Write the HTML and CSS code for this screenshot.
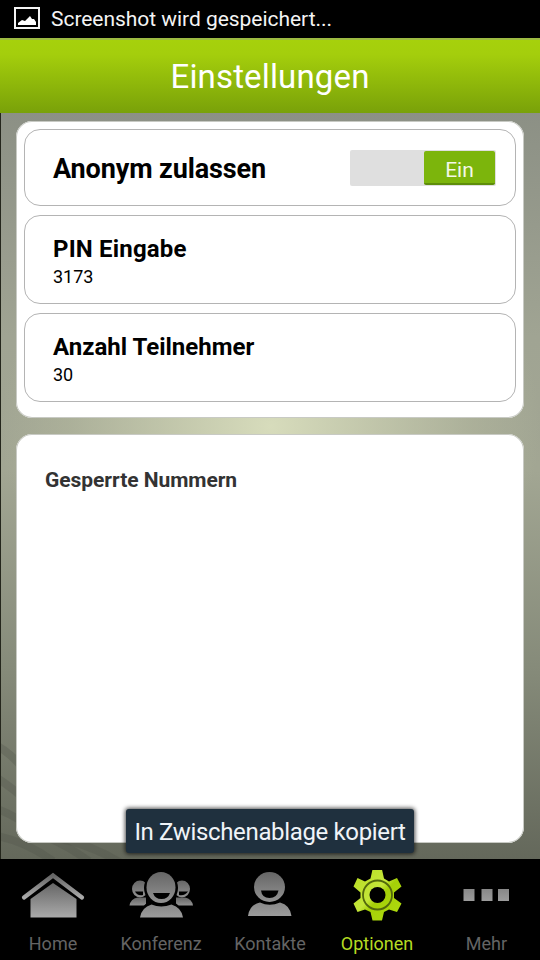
FILE: index.html
```html
<!DOCTYPE html>
<html lang="de">
<head>
    <meta charset="UTF-8">
    <title>Einstellungen</title>
    <meta name="viewport" content="width=device-width, initial-scale=1.0">
    <link rel="stylesheet" href="styles.css">
</head>
<body>

    <div class="status-bar">
        <svg class="status-icon" width="26" height="22" viewBox="0 0 26 22">
            <rect x="1" y="1" width="24" height="20" fill="none" stroke="#f4f4f4" stroke-width="2"/>
            <path d="M4 18v-2l4-3 3 1 5-5 2 3 2 0 2 3v3z" fill="#fff"/>
        </svg>
        <span class="status-text">Screenshot wird gespeichert...</span>
    </div>

    <header class="header">
        <h1>Einstellungen</h1>
    </header>

    <main class="content">
        <svg class="stripes" width="150" height="120" viewBox="0 0 150 120">
            <g fill="none" stroke="#4f5448" stroke-opacity="0.3" stroke-width="8">
                <path d="M-4 7Q10 14 26 34"/>
                <path d="M-4 39Q10 48 26 62"/>
                <path d="M-4 70Q14 76 34 92"/>
                <path d="M-4 97Q24 102 52 122"/>
                <path d="M30 92Q60 102 88 122"/>
                <path d="M60 100Q90 106 120 124"/>
            </g>
        </svg>

        <section class="card">
            <div class="row switch-row">
                <h2 class="row-title large">Anonym zulassen</h2>
                <div class="switch"><div class="switch-thumb">Ein</div></div>
            </div>
            <div class="row">
                <h2 class="row-title pin">PIN Eingabe</h2>
                <p class="row-value">3173</p>
            </div>
            <div class="row">
                <h2 class="row-title">Anzahl Teilnehmer</h2>
                <p class="row-value">30</p>
            </div>
        </section>

        <section class="card blocked">
            <h3>Gesperrte Nummern</h3>
        </section>

        <div class="toast">In Zwischenablage kopiert</div>
    </main>

    <nav class="tabs">
        <svg width="0" height="0" class="defs">
            <defs>
                <linearGradient id="grey" x1="0" y1="0" x2="0" y2="1">
                    <stop offset="0" stop-color="#666"/>
                    <stop offset="1" stop-color="#aaa"/>
                </linearGradient>
                <linearGradient id="head" x1="0" y1="0" x2="0" y2="1">
                    <stop offset="0" stop-color="#666"/>
                    <stop offset="1" stop-color="#929292"/>
                </linearGradient>
                <linearGradient id="body" x1="0" y1="0" x2="0" y2="1">
                    <stop offset="0" stop-color="#888"/>
                    <stop offset="1" stop-color="#9c9c9c"/>
                </linearGradient>
                <linearGradient id="green" x1="0" y1="0" x2="1" y2="1">
                    <stop offset="0" stop-color="#b8dc20"/>
                    <stop offset="0.45" stop-color="#c4e63a"/>
                    <stop offset="0.55" stop-color="#a5d008"/>
                    <stop offset="1" stop-color="#b0dc10"/>
                </linearGradient>
            </defs>
        </svg>
        <div class="tab">
            <svg width="66" height="56" viewBox="0 0 66 56">
                <path d="M4 27.500L33 5.500L62 27.500" fill="none" stroke="url(#grey)" stroke-width="4.200" stroke-linecap="round"/>
                <path d="M10.500 47.500V29L33 13L56.500 29V47.500z" fill="url(#grey)"/>
            </svg>
            <span>Home</span>
        </div>
        <div class="tab">
            <svg width="66" height="56" viewBox="0 0 66 56">
                <g fill="url(#head)">
                    <ellipse cx="12" cy="19" rx="8" ry="8.500"/>
                    <ellipse cx="54" cy="19" rx="8" ry="8.500"/>
                    <path d="M1.500 35.500Q2.500 29 9.500 27.500H18V35.500zM65 35.500Q64 29 57 27.500H48V35.500z"/>
                </g>
                <path d="M7 21.500H15V25Q9 26 7 21.500zM51 21.500H60Q57 26 51 25z" fill="#000"/>
                <circle cx="33" cy="18" r="17" fill="#000"/>
                <path d="M9.500 48Q12.500 35 23.500 31Q33 36 43 31Q54 35 57 48z" fill="#000"/>
                <ellipse cx="33" cy="17.500" rx="14.500" ry="15.500" fill="url(#head)"/>
                <path d="M25 23H42Q40 29 33.500 29T25 23z" fill="#000"/>
                <path d="M12 47.500Q13.500 37.500 23.500 34.500Q33 38.500 43.500 34.500Q53.500 37.500 55 47.500z" fill="url(#body)"/>
            </svg>
            <span>Konferenz</span>
        </div>
        <div class="tab shifted">
            <svg width="66" height="56" viewBox="0 0 66 56">
                <ellipse cx="32.500" cy="17" rx="15.500" ry="15" fill="url(#head)"/>
                <path d="M24 20.500H41.500Q40 28 32.500 28T24 20.500z" fill="#000"/>
                <path d="M11 46Q12.500 34.500 23 32.500Q32.500 37 43 32.500Q53 35 54.500 46z" fill="url(#body)"/>
            </svg>
            <span>Kontakte</span>
        </div>
        <div class="tab active">
            <svg width="66" height="56" viewBox="0 0 66 56">
                <path d="M28.500 -0.500H38L40 8.500L45 11.500L53 8L57.500 16.500L50 22.500V28L57.500 33.500L53 42L45 39.500L40 42L38 50.500H28.500L26.500 42L21 39.500L13.500 42L9.500 33.500L16.500 28V22.500L9.500 16.500L13.500 8L21 11.500L26.500 8.500z" fill="url(#green)"/>
                <circle cx="33.500" cy="25" r="14.500" fill="none" stroke="#52680c" stroke-width="1.800"/>
                <circle cx="33.500" cy="25" r="8" fill="#000"/>
            </svg>
            <span>Optionen</span>
        </div>
        <div class="tab shifted more">
            <svg width="66" height="56" viewBox="0 0 66 56">
                <path d="M9.500 19H20.500V31H9.500zM27.500 19H38.500V31H27.500zM44 19H55V31H44z" fill="url(#body)"/>
            </svg>
            <span>Mehr</span>
        </div>
    </nav>

</body>
</html>
```
FILE: styles.css
```css
* {
    box-sizing: border-box;
}

body {
    font-family: Roboto, sans-serif;
    width: 540px;
    height: 960px;
    margin: 0;
    background: #000;
    color: #000;
    display: flex;
    flex-direction: column;
    overflow: hidden;
}

h1, h2, h3, p {
    margin: 0;
}

.status-bar {
    height: 38px;
    padding-left: 14px;
    display: flex;
    align-items: center;
    gap: 11px;
    color: #f4f4f4;
    font-size: 21px;
    letter-spacing: -0.04px;
}

.status-icon {
    margin-top: -2px;
}

.header {
    height: 75px;
    background: linear-gradient(#a6d10c, #a4ce0c 20%, #79a109);
    border-top: 2px solid #9dbb42;
    text-align: center;
}

.header h1 {
    color: #fff;
    font-size: 33px;
    font-weight: 400;
    line-height: 73px;
    letter-spacing: 0.15px;
}

.content {
    position: relative;
    height: 746px;
    padding: 8px 16px 16px;
    border-left: 1px solid #24261c;
    padding-left: 15px;
    display: flex;
    flex-direction: column;
    gap: 16px;
    background:
        radial-gradient(ellipse 270px 230px at 50% 42%, rgba(218, 223, 190, 0.95), rgba(190, 195, 165, 0.35) 75%, rgba(170, 175, 150, 0)),
        linear-gradient(#8c9085, #a0a493 30%, #a2a693 48%, #858a79 75%, #64685b);
}

.stripes {
    position: absolute;
    left: 0;
    bottom: 0;
}

.card {
    position: relative;
    height: 297px;
    padding: 8px;
    background: #fff;
    border-radius: 16px;
    display: flex;
    flex-direction: column;
    gap: 9px;
    box-shadow: inset 0 0 0 1px #c8cac4;
}

.row {
    height: 89px;
    padding: 19px 20px 0 28px;
    border: 1px solid #b4b4b4;
    border-radius: 16px;
}

.switch-row {
    height: 77px;
    padding-top: 1px;
    padding-right: 19px;
    display: flex;
    align-items: center;
    justify-content: space-between;
}

.row-title {
    font-size: 24px;
    line-height: 28px;
}

.row-title.large {
    padding-top: 1px;
    font-size: 27px;
    letter-spacing: -0.12px;
}

.row-title.pin {
    letter-spacing: 0.18px;
}

.row-value {
    font-size: 18px;
    line-height: 28px;
}

.switch {
    width: 146px;
    height: 36px;
    padding: 1px 1px 1px 74px;
    background: #dfdfdf;
    border-radius: 2px;
}

.switch-thumb {
    height: 34px;
    background: #7cb50c;
    border-bottom: 2px solid #5e8d0a;
    border-radius: 2px;
    color: #f4f8e8;
    font-size: 21px;
    line-height: 38px;
    text-align: center;
}

.blocked {
    height: 409px;
    padding: 33px 29px;
}

.blocked h3 {
    color: #333;
    font-size: 21px;
    line-height: 26px;
    letter-spacing: -0.05px;
}

/* message shown over the lower card */
.toast {
    position: absolute;
    left: 125px;
    bottom: 6px;
    width: 288px;
    height: 44px;
    background: #1f303e;
    border-radius: 3px;
    box-shadow: 0 0 4px 1px rgba(0, 0, 0, 0.7);
    color: #f0f4f8;
    font-size: 24px;
    line-height: 46px;
    letter-spacing: -0.35px;
    text-align: center;
    white-space: nowrap;
}

.tabs {
    height: 101px;
    padding-top: 11px;
    display: grid;
    grid-template-columns: repeat(5, 108px);
}

.defs {
    position: absolute;
}

.tab {
    display: flex;
    flex-direction: column;
    align-items: center;
    color: #646464;
    font-size: 18px;
    line-height: 36px;
    padding-right: 2px;
}

.tab.shifted {
    padding-right: 0;
}

.tab.more {
    padding-left: 1px;
}

.tab.active {
    color: #b5dc22;
}
```
